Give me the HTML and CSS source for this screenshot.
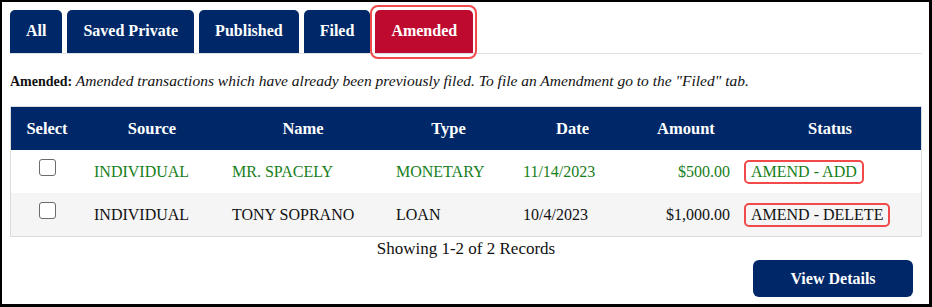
FILE: index.html
```html
<!DOCTYPE html>
<html lang="en">
<head>
    <meta charset="UTF-8">
    <meta name="viewport" content="width=device-width, initial-scale=1.0">
    <title>Amended Transactions</title>
    <link rel="stylesheet" href="styles.css">
</head>
<body>

    <div class="frame">
        <!-- Tabs -->
        <ul class="tabs">
            <li class="tab">All</li>
            <li class="tab">Saved Private</li>
            <li class="tab">Published</li>
            <li class="tab">Filed</li>
            <li class="tab active">Amended</li>
        </ul>

        <p class="description"><b>Amended:</b> <i>Amended transactions which have already been previously filed. To file an Amendment go to the "Filed" tab.</i></p>

        <!-- Transactions -->
        <table class="records">
            <thead>
                <tr>
                    <th class="col-select">Select</th>
                    <th class="col-source">Source</th>
                    <th class="col-name">Name</th>
                    <th class="col-type">Type</th>
                    <th class="col-date">Date</th>
                    <th class="col-amount">Amount</th>
                    <th class="col-status">Status</th>
                </tr>
            </thead>
            <tbody>
                <tr class="added">
                    <td class="col-select"><input type="checkbox"></td>
                    <td>INDIVIDUAL</td>
                    <td>MR. SPACELY</td>
                    <td>MONETARY</td>
                    <td>11/14/2023</td>
                    <td class="amount">$500.00</td>
                    <td class="status"><span class="badge">AMEND - ADD</span></td>
                </tr>
                <tr class="striped">
                    <td class="col-select"><input type="checkbox"></td>
                    <td>INDIVIDUAL</td>
                    <td>TONY SOPRANO</td>
                    <td>LOAN</td>
                    <td>10/4/2023</td>
                    <td class="amount">$1,000.00</td>
                    <td class="status"><span class="badge">AMEND - DELETE</span></td>
                </tr>
            </tbody>
        </table>

        <p class="count">Showing 1-2 of 2 Records</p>

        <div class="actions">
            <button class="btn">View Details</button>
        </div>
    </div>

</body>
</html>
```

FILE: styles.css
```css
body {
    margin: 0;
    padding: 0;
    font-family: "Liberation Serif", "Times New Roman", serif;
    background-color: #fff;
    color: #111;
}

.frame {
    box-sizing: border-box;
    width: 932px;
    height: 307px;
    border-style: solid;
    border-color: #000;
    border-width: 2px 3px 3px 2px;
    padding: 8px 7px 0 8px;
}

.tabs {
    display: flex;
    gap: 5px;
    list-style: none;
    margin: 0;
    padding: 0;
    border-bottom: 1px solid #dee2e6;
}

.tab {
    position: relative;
    height: 43px;
    line-height: 41px;
    padding: 0 16px;
    background-color: #002868;
    color: #fff;
    font-weight: bold;
    font-size: 16px;
    border-radius: 5px 5px 0 0;
}

.tab.active {
    background-color: #bf0a30;
}

.tab.active::after {
    content: "";
    position: absolute;
    top: -5px;
    left: -5px;
    right: -4px;
    bottom: -6px;
    border: 2px solid #f24a4a;
    border-radius: 8px;
}

.description {
    margin: 18px 0 0;
    font-size: 14px;
    line-height: 17px;
}

.description i {
    font-size: 15.5px;
}

.records {
    width: 912px;
    margin-top: 16px;
    border-collapse: collapse;
    border: 1px solid #dcdcdc;
    font-size: 16px;
}

.records th {
    height: 43px;
    padding: 0;
    background-color: #002868;
    color: #fff;
    font-size: 16.5px;
    font-weight: bold;
    text-align: center;
}

.records td {
    height: 43px;
    padding: 0 0 0 11px;
    text-align: left;
}

.col-select { width: 72px; }
.col-source { width: 138px; }
.col-name { width: 164px; }
.col-type { width: 127px; }
.col-date { width: 121px; }
.col-amount { width: 106px; }

.records td.col-select {
    padding: 0;
    text-align: center;
}

.records td.amount {
    padding: 0 9px 0 0;
    text-align: right;
}

.records td.status {
    padding-left: 5px;
}

.added td {
    color: #16801a;
}

.striped td {
    background-color: #f5f5f5;
}

input[type="checkbox"] {
    appearance: none;
    box-sizing: border-box;
    width: 17px;
    height: 17px;
    margin: 0 0 8px 0;
    border: 1.5px solid #6b6b6b;
    border-radius: 3px;
    background-color: #fff;
    vertical-align: middle;
}

.badge {
    display: inline-block;
    padding: 0 5px;
    line-height: 20px;
    border: 2px solid #f24a4a;
    border-radius: 5px;
}

.count {
    margin: 2px 0 0;
    width: 912px;
    text-align: center;
    font-size: 17px;
    line-height: 20px;
}

.actions {
    display: flex;
    justify-content: flex-end;
    width: 903px;
    margin-top: 1px;
}

.btn {
    width: 160px;
    height: 37px;
    background-color: #002868;
    color: #fff;
    border: none;
    border-radius: 6px;
    font-family: "Liberation Serif", "Times New Roman", serif;
    font-size: 16px;
    font-weight: bold;
    cursor: pointer;
}
```
